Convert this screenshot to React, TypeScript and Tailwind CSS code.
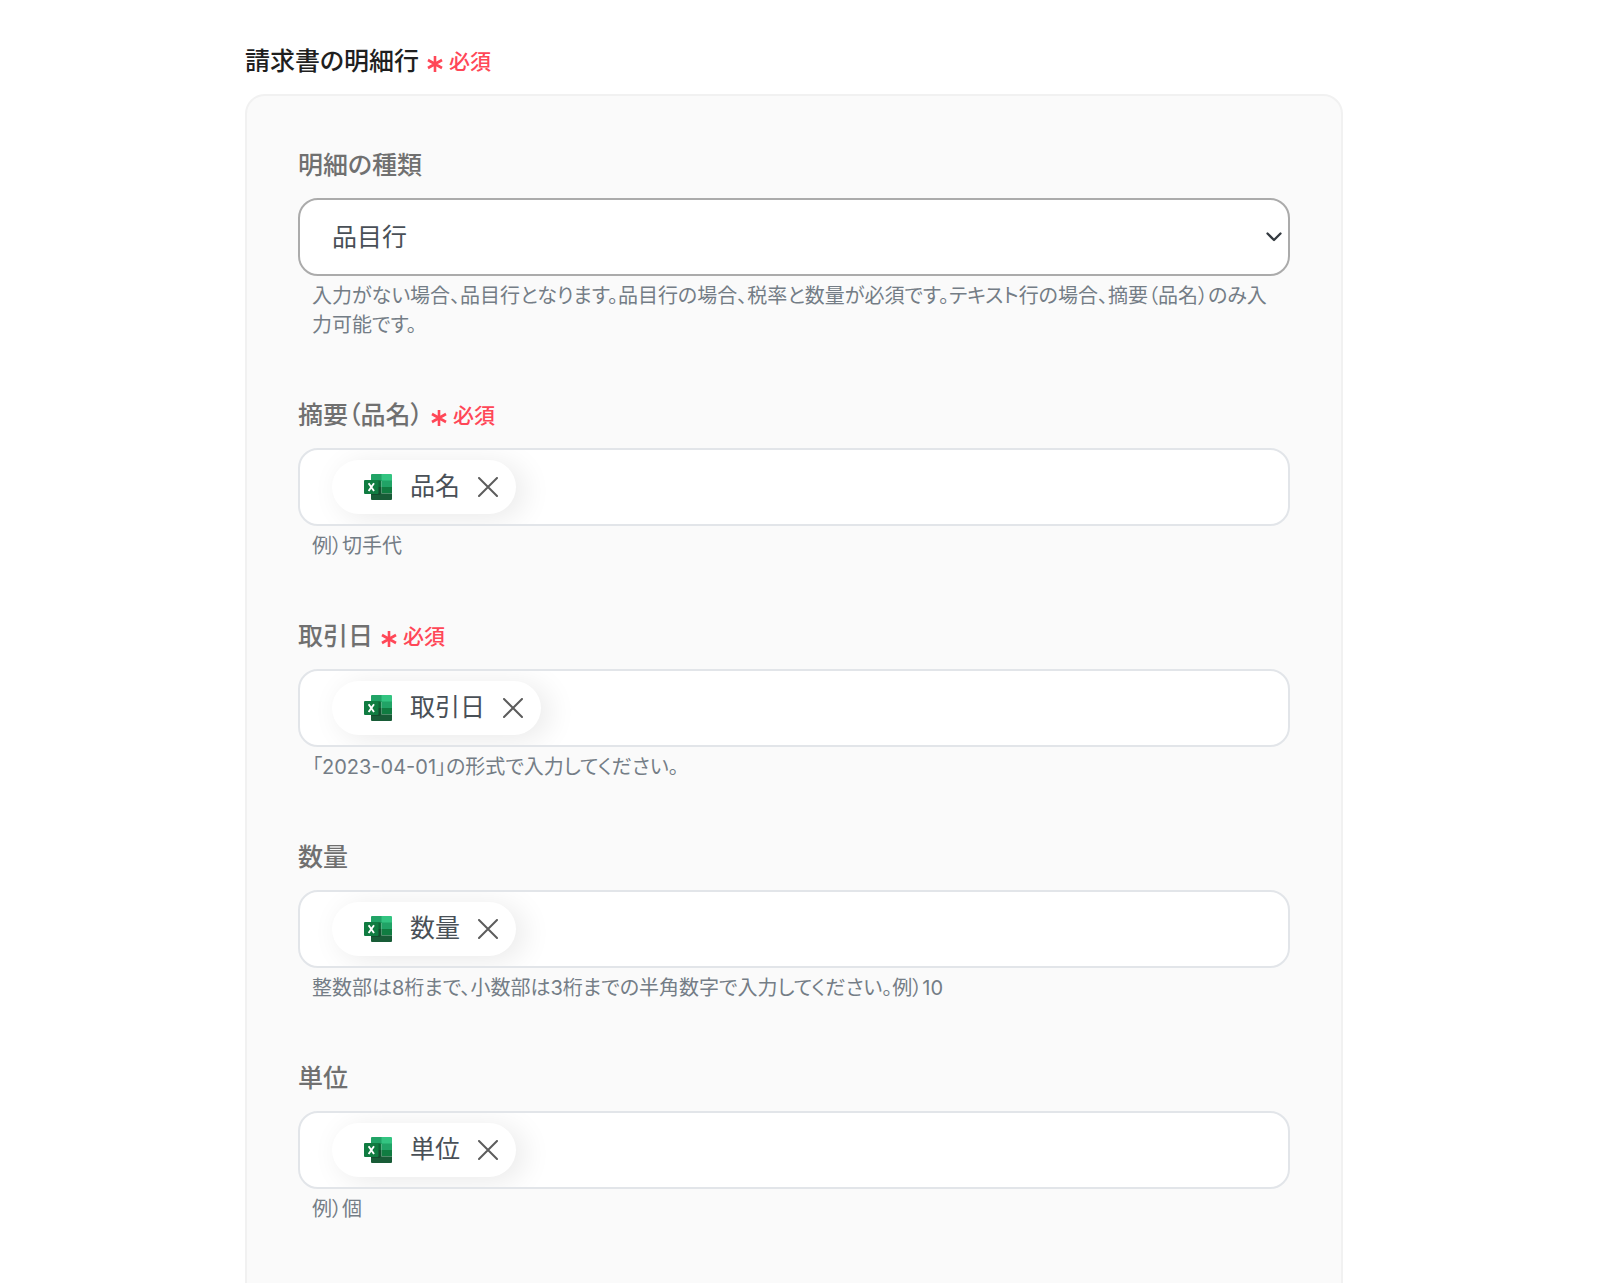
import React, { useState } from "react";

interface Field {
  id: string;
  label: string;
  required?: boolean;
  token: string;
  help: string;
}

const FIELDS: Field[] = [
  { id: "summary", label: "摘要（品名）", required: true, token: "品名", help: "例）切手代" },
  { id: "date", label: "取引日", required: true, token: "取引日", help: "「2023-04-01」の形式で入力してください。" },
  { id: "quantity", label: "数量", token: "数量", help: "整数部は8桁まで、小数部は3桁までの半角数字で入力してください。例）10" },
  { id: "unit", label: "単位", token: "単位", help: "例）個" },
];

const ExcelIcon = () => (
  <svg viewBox="0 0 28 26" className="h-[26px] w-7 shrink-0" aria-hidden="true">
    <path d="M8 0h10v7H7V1a1 1 0 0 1 1-1Z" fill="#21a366" />
    <path d="M17.500 0H27a1 1 0 0 1 1 1v6H17.500Z" fill="#33c481" />
    <path d="M7 6.500h10.500V13H7Z" fill="#107c41" />
    <path d="M17.500 6.500H28V13H17.500Z" fill="#21a366" />
    <path d="M7 13h10.500v7H7Z" fill="#185c37" />
    <path d="M17.500 13H28v6.500H17.500Z" fill="#107c41" />
    <path d="M7 19.500h21V25a1 1 0 0 1-1 1H8a1 1 0 0 1-1-1Z" fill="#185c37" />
    <path d="M7 6h8.500a1 1 0 0 1 1 1v13a1 1 0 0 1-1 1H7Z" fill="#000" opacity="0.18" />
    <rect y="6" width="14.500" height="14" rx="1" fill="#107c41" />
    <path d="m4.600 9.200 5.400 7.800M10 9.200 4.600 17" stroke="#fff" strokeWidth="1.900" fill="none" />
  </svg>
);

const Required = () => (
  <span className="flex items-center gap-1.5 text-[21px] font-medium text-[#ff4757]">
    <svg viewBox="0 0 16 16" className="mt-1 size-4" fill="none" stroke="currentColor" strokeWidth="2.600" aria-hidden="true">
      <path d="M8 0v16M1 4l14 8M15 4 1 12" />
    </svg>
    必須
  </span>
);

const Help = ({ id, children }: { id: string; children: React.ReactNode }) => (
  <p id={id} className="mt-1.5 px-3.5 text-[20px] leading-[29px] text-[#747d86]">
    {children}
  </p>
);

const TokenField = ({ field }: { field: Field }) => {
  const [token, setToken] = useState<string | null>(field.token);

  return (
    <div>
      <div className="mb-3.5 flex h-9 items-center gap-2">
        <label htmlFor={field.id} className="text-[25px] font-medium text-[#707070]">
          {field.label}
        </label>
        {field.required && <Required />}
      </div>
      <div className="flex h-[78px] items-center gap-4 overflow-hidden rounded-[20px] border-2 border-[#e2e5e9] bg-white px-8">
        {token && (
          <span className="flex h-[54px] shrink-0 items-center rounded-full bg-white pr-[18px] pl-8 text-[25px] text-[#495057] shadow-[8px_4px_30px_rgba(0,0,0,0.09)]">
            <ExcelIcon />
            <span className="ml-[18px]">{token}</span>
            <button type="button" aria-label="削除" onClick={() => setToken(null)} className="ml-[18px] cursor-pointer">
              <svg viewBox="0 0 20 20" className="size-5" fill="none" stroke="#5c5c5c" strokeWidth="2" strokeLinecap="round">
                <path d="m1 1 18 18M19 1 1 19" />
              </svg>
            </button>
          </span>
        )}
        <input
          id={field.id}
          type="text"
          aria-describedby={`${field.id}-help`}
          className="min-w-0 flex-1 bg-transparent text-[25px] text-[#495057] outline-none"
        />
      </div>
      <Help id={`${field.id}-help`}>{field.help}</Help>
    </div>
  );
};

export default function App() {
  return (
    <main
      lang="ja"
      className="h-screen overflow-y-auto bg-white pt-[43px] pr-[257px] pl-[245px] font-['Inter','Noto_Sans_CJK_JP',sans-serif] [font-feature-settings:'palt'] [scrollbar-width:none]"
    >
      <div className="mb-[13px] flex h-[38px] items-center gap-2">
        <h1 className="text-[25px] font-medium text-[#1f1f1f]">請求書の明細行</h1>
        <Required />
      </div>

      <form className="flex flex-col gap-[58px] rounded-[20px] border-2 border-[#f1f1f1] bg-[#fafafa] px-[51px] pt-[52px] pb-24">
        <div>
          <div className="mb-3.5 flex h-9 items-center">
            <label htmlFor="line-type" className="text-[25px] font-medium text-[#707070]">
              明細の種類
            </label>
          </div>
          <div className="relative">
            <select
              id="line-type"
              aria-describedby="line-type-help"
              className="block h-[78px] w-full appearance-none rounded-[20px] border-2 border-[#ababab] bg-white px-8 pt-0.5 text-[25px] text-[#495057]"
            >
              <option>品目行</option>
              <option>テキスト行</option>
            </select>
            <svg
              viewBox="0 0 16 10"
              className="pointer-events-none absolute top-[34px] right-2 h-2.5 w-4"
              fill="none"
              stroke="#343a40"
              strokeWidth="2.300"
              strokeLinecap="round"
              strokeLinejoin="round"
            >
              <path d="m1.500 1.500 6.500 6.500 6.500-6.500" />
            </svg>
          </div>
          <Help id="line-type-help">
            入力がない場合、品目行となります。品目行の場合、税率と数量が必須です。テキスト行の場合、摘要（品名）のみ入力可能です。
          </Help>
        </div>

        {FIELDS.map((f) => (
          <TokenField key={f.id} field={f} />
        ))}
      </form>
    </main>
  );
}
